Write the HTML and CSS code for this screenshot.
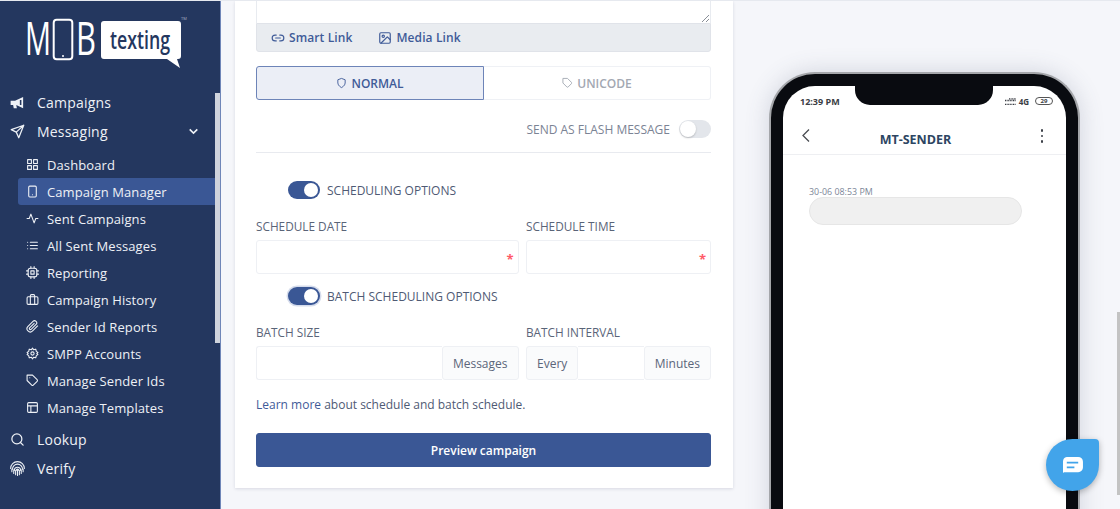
FILE: index.html
```html
<!DOCTYPE html>
<html lang="en">
<head>
<meta charset="utf-8">
<title>MOB texting - Campaign Manager</title>
<link rel="stylesheet" href="styles.css">
</head>
<body>
<aside class="sidebar">
  <div class="logo">
    <svg class="logo-svg" width="221" height="87" viewBox="0 0 221 87">
      <text class="logo-letter" x="25" y="54" textLength="26" lengthAdjust="spacingAndGlyphs">M</text>
      <rect class="logo-phone" x="53.7" y="18.7" width="18.6" height="39.6" rx="3"/>
      <circle class="logo-dot" cx="63" cy="55" r="1"/>
      <text class="logo-letter" x="76" y="54" textLength="20" lengthAdjust="spacingAndGlyphs">B</text>
      <path class="logo-bubble" d="M104 20h74a3 3 0 0 1 3 3v32a3 3 0 0 1-3 3h-1l3 9-13-9h-63a3 3 0 0 1-3-3V23a3 3 0 0 1 3-3z"/>
      <text class="logo-texting" x="110" y="47.5" textLength="60" lengthAdjust="spacingAndGlyphs">texting</text>
      <text class="logo-tm" x="181" y="19">TM</text>
    </svg>
  </div>
  <nav class="nav">
    <a class="nav-top"><svg class="ico-top" viewBox="0 0 24 24"><path class="solid" d="M1 9h7l13-6v18L10 16l1 5H6l-1-5H1z"/><path class="cut" d="M17 8v8"/></svg>Campaigns</a>
    <a class="nav-top"><svg class="ico-top" viewBox="0 0 24 24"><path class="line" d="M22 2 2 9l8 4 4 9zM10 13 22 2"/></svg>Messaging<svg class="chev" viewBox="0 0 24 24"><path d="m5 8 7 7 7-7"/></svg></a>
    <div class="sub">
      <a class="nav-sub"><svg class="ico-sub" viewBox="0 0 24 24"><path class="line" d="M3 3h7v7H3zM14 3h7v7h-7zM3 14h7v7H3zM14 14h7v7h-7z"/></svg>Dashboard</a>
      <a class="nav-sub active"><svg class="ico-sub" viewBox="0 0 24 24"><rect class="line" x="5" y="2" width="14" height="20" rx="2"/><path class="line" d="M12 18h.01"/></svg>Campaign Manager</a>
      <a class="nav-sub"><svg class="ico-sub" viewBox="0 0 24 24"><path class="line" d="M22 12h-4l-3 8L9 4l-3 8H2"/></svg>Sent Campaigns</a>
      <a class="nav-sub"><svg class="ico-sub" viewBox="0 0 24 24"><path class="line" d="M8 6h13M8 12h13M8 18h13M3 6h.01M3 12h.01M3 18h.01"/></svg>All Sent Messages</a>
      <a class="nav-sub"><svg class="ico-sub" viewBox="0 0 24 24"><rect class="line" x="4" y="4" width="16" height="16" rx="4"/><rect class="line" x="9" y="9" width="6" height="6"/><path class="line" d="M9 1v3M15 1v3M9 20v3M15 20v3M20 9h3M20 15h3M1 9h3M1 15h3"/></svg>Reporting</a>
      <a class="nav-sub"><svg class="ico-sub" viewBox="0 0 24 24"><rect class="line" x="2" y="7" width="20" height="14" rx="2"/><path class="line" d="M16 21V5a2 2 0 0 0-2-2h-4a2 2 0 0 0-2 2v16"/></svg>Campaign History</a>
      <a class="nav-sub"><svg class="ico-sub" viewBox="0 0 24 24"><path class="line" d="m21.4 11-9.2 9.2a6 6 0 0 1-8.5-8.5l9.2-9.2a4 4 0 0 1 5.7 5.7l-9.2 9.2a2 2 0 0 1-2.8-2.8l8.5-8.5"/></svg>Sender Id Reports</a>
      <a class="nav-sub"><svg class="ico-sub ico-gear" viewBox="0 0 24 24"><circle class="line" cx="12" cy="12" r="3"/><path class="line" d="M12 2l2 3 4-1 1 4 3 2-2 2 2 2-3 2-1 4-4-1-2 3-2-3-4 1-1-4-3-2 2-2-2-2 3-2 1-4 4 1z"/></svg>SMPP Accounts</a>
      <a class="nav-sub"><svg class="ico-sub" viewBox="0 0 24 24"><path class="line" d="M20.6 13.4l-7.2 7.2a2 2 0 0 1-2.8 0L2 12V2h10l8.6 8.6a2 2 0 0 1 0 2.8zM7 7h.01"/></svg>Manage Sender Ids</a>
      <a class="nav-sub"><svg class="ico-sub" viewBox="0 0 24 24"><rect class="line" x="3" y="3" width="18" height="18" rx="2"/><path class="line" d="M3 9h18M9 21V9"/></svg>Manage Templates</a>
    </div>
    <a class="nav-top"><svg class="ico-top" viewBox="0 0 24 24"><circle class="line" cx="11" cy="11" r="8"/><path class="line" d="m21 21-4.3-4.3"/></svg>Lookup</a>
    <a class="nav-top"><svg class="ico-top" viewBox="0 0 24 24"><path class="line thin" d="M1 12a11 11 0 0 1 22 0M4 13a8 8 0 0 1 16 0M7 15a5 5 0 0 1 10 0M10 15a2 2 0 0 1 4 0M3 13v4M6 14v6M9 15v7M12 15v8M15 15v7M18 14v6M21 13v4"/></svg>Verify</a>
  </nav>
  <div class="side-thumb"></div>
</aside>

<main class="content">
  <section class="card">
    <div class="textarea"><svg class="grip" viewBox="0 0 8 8"><path d="M8 1 1 8M8 5 5 8"/></svg></div>
    <div class="toolbar">
      <a class="tool"><svg class="ico-tool" viewBox="0 0 24 24"><path d="M9 17H7A5 5 0 0 1 7 7h2M15 7h2a5 5 0 1 1 0 10h-2M8 12h8"/></svg>Smart Link</a>
      <a class="tool"><svg class="ico-tool" viewBox="0 0 24 24"><rect x="3" y="3" width="18" height="18" rx="2"/><circle cx="9" cy="9" r="2"/><path d="m21 15-5-5L5 21"/></svg>Media Link</a>
    </div>
    <div class="tabs">
      <div class="tab tab-on"><svg class="ico-tab" viewBox="0 0 24 24"><path d="M12 22s8-4 8-10V5l-8-3-8 3v7c0 6 8 10 8 10z"/></svg>NORMAL</div>
      <div class="tab tab-off"><svg class="ico-tab" viewBox="0 0 24 24"><path d="M20.6 13.4l-7.2 7.2a2 2 0 0 1-2.8 0L2 12V2h10l8.6 8.6a2 2 0 0 1 0 2.8zM7 7h.01"/></svg>UNICODE</div>
    </div>
    <div class="flash"><span class="flash-label">SEND AS FLASH MESSAGE</span><span class="switch switch-off"><span class="knob"></span></span></div>
    <hr class="rule">
    <div class="opt opt-first"><span class="switch switch-on"><span class="knob"></span></span><span class="opt-text">SCHEDULING OPTIONS</span></div>
    <div class="grid grid-first">
      <div class="field"><label>SCHEDULE DATE</label><div class="input"><span class="req">*</span></div></div>
      <div class="field"><label>SCHEDULE TIME</label><div class="input"><span class="req">*</span></div></div>
    </div>
    <div class="opt opt-second"><span class="switch switch-on switch-focus"><span class="knob"></span></span><span class="opt-text">BATCH SCHEDULING OPTIONS</span></div>
    <div class="grid grid-second">
      <div class="field"><label>BATCH SIZE</label>
        <div class="group"><div class="input grow join-r"></div><span class="addon">Messages</span></div></div>
      <div class="field"><label>BATCH INTERVAL</label>
        <div class="group"><span class="addon">Every</span><div class="input grow join-x"></div><span class="addon">Minutes</span></div></div>
    </div>
    <p class="learn"><a>Learn more</a> about schedule and batch schedule.</p>
    <button class="preview" type="button">Preview campaign</button>
  </section>

  <section class="preview-pane">
    <div class="phone">
      <div class="screen">
        <div class="notch"></div>
        <div class="status">
          <span>12:39 PM</span>
          <span class="status-right">
            <svg class="signal" viewBox="0 0 11 7"><path d="M0 6.5h11M0 2.5h11M4 .8h7"/></svg>
            <span>4G</span>
            <span class="battery">29</span>
          </span>
        </div>
        <div class="phone-head">
          <svg class="back" viewBox="0 0 10 14"><path d="M8 1 2 7l6 6"/></svg>
          <span class="sender">MT-SENDER</span>
          <span class="dots"><i></i><i></i><i></i></span>
        </div>
        <div class="msgs">
          <div class="stamp">30-06 08:53 PM</div>
          <div class="bubble"></div>
        </div>
      </div>
    </div>
  </section>
</main>
<div class="page-thumb"></div>
<button class="chat" type="button" aria-label="Chat"><svg viewBox="0 0 24 20"><path class="chat-shape" d="M6 1h12a5 5 0 0 1 5 5v6a5 5 0 0 1-5 5H3l-1 1V6a5 5 0 0 1 4-5z"/><path class="chat-lines" d="M6 7h12M6 12h8"/></svg></button>
</body>
</html>
```
FILE: styles.css
```css
* { box-sizing: border-box; }
html, body { height: 100%; }
body {
  margin: 0;
  height: 509px;
  overflow: hidden;
  display: flex;
  border-top: 1px solid #e6e9ef;
  background: #f5f6fa;
  font-family: "Open Sans", "Liberation Sans", sans-serif;
  color: #4a5672;
}
.sidebar {
  position: relative;
  width: 221px;
  flex: none;
  background: #24375f;
  border-right: 1px solid #6f86b8;
  color: #eef1f6;
}
.logo { height: 87px; }
.logo-svg { display: block; }
.logo-letter { font-family: "Open Sans", sans-serif; font-size: 45px; font-weight: 400; fill: #fff; }
.logo-phone { fill: none; stroke: #fff; stroke-width: 2; }
.logo-dot { fill: #fff; }
.logo-bubble { fill: #fff; }
.logo-texting { font-family: "Open Sans", sans-serif; font-size: 25px; font-weight: 600; fill: #24375f; }
.logo-tm { font-family: "Open Sans", sans-serif; font-size: 4px; fill: #aab3c6; }
.nav { display: flex; flex-direction: column; }
.nav-top {
  display: flex;
  align-items: center;
  height: 29px;
  padding-left: 10px;
  font-size: 14px;
  letter-spacing: .2px;
}
.ico-top { width: 15px; height: 15px; margin-right: 12px; flex: none; }
.line { fill: none; stroke: #eef1f6; stroke-width: 2; stroke-linecap: round; stroke-linejoin: round; }
.thin { stroke-width: 1.7; }
.solid { fill: #eef1f6; }
.cut { fill: none; stroke: #24375f; stroke-width: 2.5; }
.chev { width: 13px; height: 13px; margin-left: auto; margin-right: 20px; fill: none; stroke: #eef1f6; stroke-width: 3; }
.sub { display: flex; flex-direction: column; margin: 5px 0 4px 18px; width: 197px; }
.nav-sub {
  display: flex;
  align-items: center;
  height: 27px;
  padding-left: 8px;
  font-size: 13px;
  letter-spacing: .1px;
  border-radius: 3px 0 0 3px;
}
.nav-sub.active { background: #3a5795; }
.ico-sub { width: 13px; height: 13px; margin-right: 8px; flex: none; }
.side-thumb { position: absolute; left: 215px; top: 92px; width: 5px; height: 250px; background: #cfd3dc; }

.content { flex: 1; display: flex; min-width: 0; }
.card {
  width: 498px;
  height: 487px;
  margin-left: 14px;
  padding: 0 22px 0 21px;
  flex: none;
  background: #fff;
  box-shadow: 0 1px 3px rgba(60, 70, 100, .16);
}
.textarea {
  position: relative;
  height: 22px;
  border: 1px solid #e8ebf0;
  border-top: 0;
  border-bottom: 0;
}
.grip { position: absolute; right: 1px; bottom: 1px; width: 8px; height: 8px; fill: none; stroke: #8a8f98; stroke-width: 1; }
.toolbar {
  display: flex;
  align-items: center;
  gap: 26px;
  height: 29px;
  padding-left: 14px;
  background: #e9ecf0;
  border: 1px solid #e0e3e9;
  border-radius: 0 0 3px 3px;
}
.tool { display: flex; align-items: center; font-size: 12px; font-weight: 600; color: #3f5b98; letter-spacing: .1px; }
.ico-tool { width: 14px; height: 14px; margin-right: 4px; fill: none; stroke: #3f5b98; stroke-width: 2; stroke-linecap: round; stroke-linejoin: round; }
.tabs { display: flex; height: 34px; margin-top: 14px; font-size: 12px; font-weight: 600; }
.tab { display: flex; align-items: center; justify-content: center; flex: 1; }
.tab-on { background: #ebeef6; border: 1px solid #6d84b8; border-radius: 3px 0 0 3px; color: #3f5b98; }
.tab-off { border: 1px solid #eff1f5; border-left: 0; border-radius: 0 3px 3px 0; color: #a3a8b2; }
.ico-tab { width: 11px; height: 12px; margin-right: 4px; fill: none; stroke: currentColor; stroke-width: 2; stroke-linejoin: round; }
.flash { display: flex; align-items: center; justify-content: flex-end; height: 18px; margin-top: 20px; font-size: 12px; color: #7b8394; }
.flash-label { margin-right: 9px; }
.switch { position: relative; display: block; width: 32px; height: 18px; border-radius: 9px; flex: none; }
.switch-off { background: #e3e6eb; }
.switch-on { background: #3a5795; }
.switch-focus { box-shadow: 0 0 0 1.5px #d5dcec; }
.knob { position: absolute; top: 2px; width: 14px; height: 14px; border-radius: 50%; background: #fff; }
.switch-on .knob { right: 2px; }
.switch-off .knob { left: 1px; top: 1px; width: 16px; height: 16px; box-shadow: 0 1px 2px rgba(0,0,0,.2); }
.rule { height: 1px; margin: 14px 0 0; border: 0; background: #e8eaef; }
.opt { display: flex; align-items: center; gap: 7px; height: 18px; padding-left: 32px; font-size: 12px; color: #4f5a74; }
.opt-text { padding-top: 1px; }
.opt-first { margin-top: 28px; }
.opt-second { margin-top: 13px; }
.grid { display: grid; grid-template-columns: 262.5px 185px; column-gap: 7.5px; }
.grid-first { margin-top: 18px; }
.grid-second { margin-top: 18px; }
.field label { display: block; height: 17px; margin-bottom: 6px; padding-top: 1px; font-size: 11.8px; line-height: 17px; color: #5a6478; }
.input { position: relative; height: 34px; background: #fff; border: 1px solid #eef0f4; border-radius: 3px; }
.req { position: absolute; right: 4px; top: 9px; font-size: 13px; font-weight: 700; line-height: 18px; color: #ff5a68; }
.group { display: flex; height: 34px; }
.grow { flex: 1; min-width: 0; }
.join-r { border-right: 0; border-radius: 3px 0 0 3px; }
.join-x { border-left: 0; border-right: 0; border-radius: 0; }
.addon { display: flex; align-items: center; padding: 0 10px; background: #fafbfc; border: 1px solid #eef0f4; border-radius: 3px; font-size: 12px; color: #5c667a; }
.learn { margin: 16px 0 0; height: 17px; font-size: 12px; line-height: 17px; color: #4f5a74; }
.learn a { color: #3f5b98; }
.preview {
  display: block;
  width: 100%;
  height: 34px;
  margin-top: 20px;
  padding: 0;
  background: #3a5795;
  border: 1px solid #3a5795;
  border-radius: 3px;
  color: #fff;
  font: 600 12px "Open Sans", sans-serif;
}
.preview-pane { flex: 1; min-width: 0; height: 508px; overflow: hidden; padding: 71px 0 0 36px; }
.phone {
  width: 311px;
  height: 620px;
  padding: 12px 12px 0;
  background: #090b10;
  border: 2px solid #a4a6aa;
  border-bottom: 0;
  border-radius: 46px 46px 0 0;
  box-shadow: 0 0 24px rgba(70, 80, 110, .2);
}
.screen { position: relative; width: 283px; height: 600px; background: #fff; border-radius: 32px 32px 0 0; }
.notch { position: absolute; left: 72px; top: 0; width: 138px; height: 19px; background: #090b10; border-radius: 0 0 15px 15px; }
.status { display: flex; justify-content: space-between; align-items: center; height: 30px; padding: 0 13px 0 17px; font-size: 9px; font-weight: 700; color: #3a3d44; }
.status-right { display: flex; align-items: center; gap: 3px; font-size: 8px; }
.signal { width: 11px; height: 7px; fill: none; stroke: #3a3d44; stroke-width: 1.3; stroke-dasharray: 1 .6; }
.battery { display: block; width: 18px; height: 8px; margin-left: 3px; border: 1px solid #555; border-radius: 4px; font-size: 6px; line-height: 6px; text-align: center; }
.phone-head { position: relative; display: flex; justify-content: center; align-items: center; height: 39px; padding: 9px 18px 0 0; border-bottom: 1px solid #eeeff2; }
.back { position: absolute; left: 18px; top: 12px; width: 10px; height: 15px; fill: none; stroke: #4a4d52; stroke-width: 1.3; }
.sender { font-size: 12.5px; font-weight: 700; color: #2d4562; }
.dots { position: absolute; right: 23px; top: 13px; display: flex; flex-direction: column; gap: 3px; }
.dots i { display: block; width: 2.5px; height: 2.5px; border-radius: 50%; background: #3c4048; }
.msgs { padding: 31px 0 0 26px; }
.stamp { height: 11px; font-size: 8.9px; line-height: 11px; color: #7c8698; }
.bubble { width: 213px; height: 28px; background: #f0f0f0; border: 1px solid #e6e6e6; border-radius: 14px; }
.page-thumb { position: fixed; right: 0; top: 312px; width: 3px; height: 183px; background: #c3c3c3; }
.chat {
  position: fixed;
  left: 1046px;
  top: 439px;
  width: 53px;
  height: 52px;
  padding: 0;
  background: #42a4ea;
  border: 0;
  border-radius: 50% 4px 50% 50%;
  box-shadow: 0 2px 6px rgba(0, 0, 0, .28);
}
.chat svg { display: block; width: 23px; height: 19px; margin: 0 auto; }
.chat-shape { fill: #fff; }
.chat-lines { fill: none; stroke: #42a4ea; stroke-width: 2; }
```
